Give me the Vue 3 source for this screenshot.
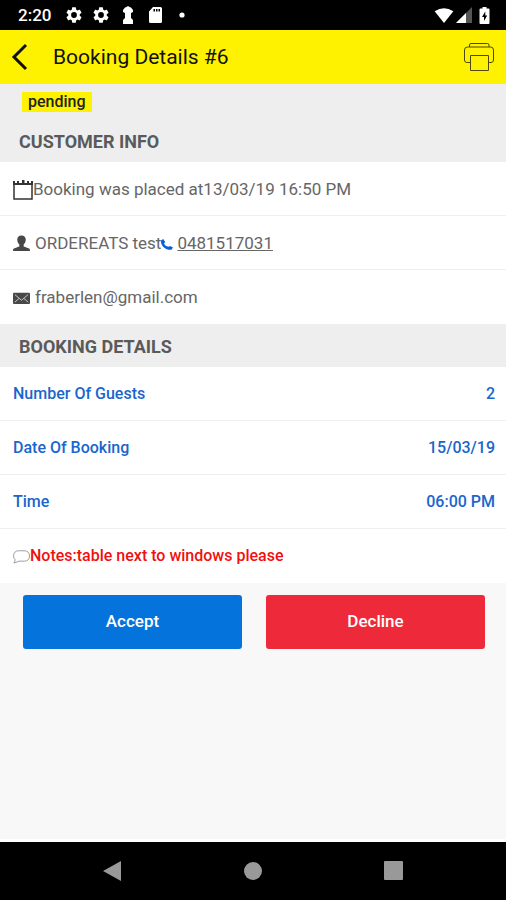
<script setup>
const customer = {
  placedAt: '13/03/19 16:50 PM',
  name: 'ORDEREATS test',
  phone: '0481517031',
  email: 'fraberlen@gmail.com',
}

const details = [
  { label: 'Number Of Guests', value: '2' },
  { label: 'Date Of Booking', value: '15/03/19' },
  { label: 'Time', value: '06:00 PM' },
]

const gear =
  'M19.14 12.94c.04-.3.06-.61.06-.94 0-.32-.02-.64-.07-.94l2.03-1.58a.49.49 0 0 0 .12-.61l-1.92-3.32a.49.49 0 0 0-.59-.22l-2.39.96c-.5-.38-1.03-.7-1.62-.94l-.36-2.54a.48.48 0 0 0-.48-.41h-3.84c-.24 0-.43.17-.47.41l-.36 2.54c-.59.24-1.13.57-1.62.94l-2.39-.96a.48.48 0 0 0-.59.22L2.74 8.87c-.12.21-.08.47.12.61l2.03 1.58c-.05.3-.09.63-.09.94s.02.64.07.94l-2.03 1.58a.49.49 0 0 0-.12.61l1.92 3.32c.12.22.37.29.59.22l2.39-.96c.5.38 1.03.7 1.62.94l.36 2.54c.05.24.24.41.48.41h3.84c.24 0 .44-.17.47-.41l.36-2.54c.59-.24 1.13-.56 1.62-.94l2.39.96c.22.08.47 0 .59-.22l1.92-3.32a.48.48 0 0 0-.12-.61l-2.01-1.58zM12 15.6A3.6 3.6 0 1 1 12 8.4a3.6 3.6 0 0 1 0 7.2z'
</script>

<template>
  <div class="screen">
    <div class="status-bar">
      <span class="clock">2:20</span>
      <div class="status-left">
        <svg v-for="n in 2" :key="n" class="status-icon" viewBox="2 2 20 20"><path :d="gear" /></svg>
        <svg class="status-icon" viewBox="0 0 16 18">
          <path d="M5 1.500 6.500 1 8 0l1.500 1 1.500.5L13 4v2l-2 1v5l2 2v4H3v-4l2-2V7L3 6V4z" />
        </svg>
        <svg class="status-icon" viewBox="0 0 16 18">
          <path fill-rule="evenodd" d="M6 1h7.500a1.500 1.500 0 0 1 1.500 1.500v13a1.500 1.500 0 0 1-1.500 1.500h-10A1.500 1.500 0 0 1 2 15.500V5.500zM6.500 3v2.500H8V3zM9 3v2.500h1.500V3zM11.500 3v2.500H13V3z" />
        </svg>
        <svg class="status-icon" viewBox="0 0 16 18"><circle cx="8" cy="9" r="2.600" /></svg>
      </div>
      <div class="status-right">
        <svg class="wifi" viewBox="0 0 20 16"><path d="M0 3.500Q10-3.200 20 3.500L10 16z" /></svg>
        <svg class="signal" viewBox="0 0 16 16">
          <path d="M0 16 16 0v16z" fill="#555" /><path d="M0 16 10 6v10z" />
        </svg>
        <svg class="battery" viewBox="0 0 10 17">
          <path fill-rule="evenodd" d="M3 0h4v1.500h2a1 1 0 0 1 1 1V16a1 1 0 0 1-1 1H1a1 1 0 0 1-1-1V2.500a1 1 0 0 1 1-1h2zM5.800 4.500 2.500 10h2v4l3.200-5.500H5.800z" />
        </svg>
      </div>
    </div>

    <header class="app-bar">
      <button class="icon-button" type="button" aria-label="Back">
        <svg class="back" viewBox="0 0 18 28"><path d="M15 2 3 14l12 12" /></svg>
      </button>
      <h1 class="title">Booking Details #6</h1>
      <button class="icon-button" type="button" aria-label="Print">
        <svg class="printer" viewBox="0 0 32 30">
          <path d="M6.500 5V3a1.500 1.500 0 0 1 1.500-1.500h16.500A1.500 1.500 0 0 1 26 3v2M7 20.500H4a2.500 2.500 0 0 1-2.500-2.500V8a3 3 0 0 1 3-3h23a3 3 0 0 1 3 3v10a2.500 2.500 0 0 1-2.500 2.500H25M7.500 13.500h18v15h-18z" />
        </svg>
      </button>
    </header>

    <main class="content">
      <section>
        <div class="status-line"><span class="badge">pending</span></div>
        <h2 class="section-title">CUSTOMER INFO</h2>
        <div class="row info">
          <svg class="calendar" viewBox="0 0 20 22">
            <path d="M1 6.500V21h18V6.500" fill="none" stroke="#333" stroke-width="1.500" />
            <path d="M0 3h2v4H0zM4 3h2v3H4zM9 2h2.500v4H9zM14 3h2v3h-2zM18 3h2v4h-2z" fill="#333" />
            <path d="M1 6h18" stroke="#333" stroke-width="2" />
          </svg>
          <span>Booking was placed at{{ customer.placedAt }}</span>
        </div>
        <div class="row info">
          <svg class="glyph" viewBox="0 0 18 20">
            <path d="M9 2.500c3 0 4.500 1.800 4.500 4.300 0 2.200-.9 4.200-2.200 5.400v2c2 .9 5.200 1.500 6.200 2.500.4.500.5 1.200.5 2.300H0c0-1.100.1-1.800.5-2.300 1-1 4.200-1.600 6.200-2.500v-2C5.400 11 4.500 9 4.500 6.800 4.500 4.300 6 2.500 9 2.500z" fill="#484848" />
          </svg>
          <span class="after-glyph">{{ customer.name }}</span>
          <svg class="phone" viewBox="0 0 12 14">
            <path d="M0 4.500 2.200 3l2 3-1.200 1.500c.8 1.900 2.400 2.800 4.500 3.300L9 9.900l3 1.600-1.500 2.200C5 14.500-.5 10 0 4.500z" fill="#0b5ed7" />
          </svg>
          <a class="tel" :href="`tel:${customer.phone}`">{{ customer.phone }}</a>
        </div>
        <div class="row info">
          <svg class="glyph" viewBox="0 0 18 20">
            <rect y="6" width="18" height="12" rx="1" fill="#484848" />
            <path d="m2 8 7 6 7-6M2 16l4.500-4M16 16l-4.500-4" fill="none" stroke="#ccc" />
          </svg>
          <span class="after-glyph">{{ customer.email }}</span>
        </div>
      </section>

      <section>
        <h2 class="section-title">BOOKING DETAILS</h2>
        <dl class="details">
          <div v-for="item in details" :key="item.label" class="row detail">
            <dt>{{ item.label }}</dt>
            <dd>{{ item.value }}</dd>
          </div>
        </dl>
        <div class="row notes">
          <svg class="glyph" viewBox="0 0 18 20">
            <path d="M6 5h6c3.500 0 5.500 2 5.500 5.500S15.500 16 12 16H6.500L1 18l1.500-3.500C1.200 13.500.6 12 .6 10.500.6 7 2.600 5 6 5z" fill="none" stroke="#999" />
          </svg>
          <span>Notes:table next to windows please</span>
        </div>
      </section>

      <div class="actions">
        <button class="action accept" type="button">Accept</button>
        <button class="action decline" type="button">Decline</button>
      </div>
    </main>

    <nav class="nav-bar">
      <button class="icon-button" type="button" aria-label="System back">
        <svg class="nav-icon" viewBox="0 0 20 22"><path d="M1 11 19 1v20z" /></svg>
      </button>
      <button class="icon-button" type="button" aria-label="Home">
        <svg class="nav-icon" viewBox="0 0 20 22"><circle cx="10" cy="11" r="9" /></svg>
      </button>
      <button class="icon-button" type="button" aria-label="Recent apps">
        <svg class="nav-icon" viewBox="0 0 20 22"><rect x="0" y="1" width="19" height="19" rx="1" /></svg>
      </button>
    </nav>
  </div>
</template>

<style>
body {
  margin: 0;
}
</style>

<style scoped>
.screen {
  display: flex;
  flex-direction: column;
  min-height: 100vh;
  background: #f8f8f8;
  color: #666;
  font-family: Roboto, "Liberation Sans", sans-serif;
}

svg {
  display: block;
  flex: none;
}

.status-bar {
  display: flex;
  align-items: center;
  height: 30px;
  padding: 0 16px 0 18px;
  background: #000;
  color: #fff;
}

.status-bar svg {
  fill: #fff;
}

.clock {
  font-size: 17px;
  font-weight: 500;
}

.status-left {
  display: flex;
  gap: 11px;
  margin-left: 15px;
}

.status-icon {
  width: 16px;
  height: 18px;
}

.status-right {
  display: flex;
  align-items: center;
  margin-left: auto;
}

.wifi {
  width: 20px;
  height: 15px;
}

.signal {
  width: 16px;
  height: 16px;
  margin: 0 7px 0 2px;
}

.battery {
  width: 11px;
  height: 17px;
}

.app-bar {
  display: flex;
  align-items: center;
  height: 54px;
  padding: 0 11px;
  background: #fff200;
  color: #111;
}

.icon-button {
  padding: 0;
  border: 0;
  background: none;
}

.back {
  width: 18px;
  height: 28px;
  fill: none;
  stroke: #111;
  stroke-width: 3;
}

.title {
  flex: 1;
  margin: 0 0 0 24px;
  font-size: 21px;
  font-weight: 400;
}

.printer {
  width: 32px;
  height: 30px;
  fill: none;
  stroke: #4d4900;
  stroke-width: 1;
}

.content {
  flex: 1;
}

.status-line {
  display: flex;
  padding: 8px 22px 0;
  background: #eee;
}

.badge {
  padding: 0 6px;
  background: #fff200;
  color: #222;
  font-size: 16px;
  font-weight: 500;
  line-height: 20px;
}

.section-title {
  margin: 0;
  padding: 2px 19px 0;
  background: #eee;
  color: #5a5a5a;
  font-size: 18px;
  font-weight: 700;
  line-height: 41px;
}

.status-line + .section-title {
  padding-top: 9px;
}

.row {
  display: flex;
  align-items: center;
  box-sizing: border-box;
  min-height: 54px;
  padding: 0 11px 0 13px;
  border-bottom: 1px solid #eee;
  background: #fff;
}

.row:last-child:not(.detail) {
  border-bottom-color: #fff;
}

.info {
  font-size: 17px;
}

.calendar {
  width: 20px;
  height: 22px;
}

.glyph {
  width: 17px;
  height: 19px;
}

.after-glyph {
  margin-left: 5px;
}

.phone {
  width: 12px;
  height: 14px;
}

.tel {
  margin-left: 4px;
  color: inherit;
}

.details {
  margin: 0;
}

.detail {
  justify-content: space-between;
  color: #1a66cc;
  font-size: 16px;
  font-weight: 500;
}

.detail dd {
  margin: 0;
}

.notes {
  color: #f01010;
  font-size: 16px;
  font-weight: 500;
}

.actions {
  display: grid;
  grid-template-columns: 1fr 1fr;
  gap: 24px;
  padding: 12px 21px 12px 23px;
}

.action {
  height: 54px;
  padding: 0 0 2px;
  border: 0;
  border-radius: 3px;
  color: #fff;
  font-family: inherit;
  font-size: 17px;
  font-weight: 500;
}

.accept {
  background: #0573dc;
}

.decline {
  background: #ee2a3a;
}

.nav-bar {
  display: grid;
  grid-template-columns: repeat(3, 1fr);
  place-items: center;
  height: 58px;
  padding: 0 42px;
  border-top: 3px solid #fff;
  background: #000;
}

.nav-icon {
  width: 20px;
  height: 22px;
  fill: #999;
}
</style>
